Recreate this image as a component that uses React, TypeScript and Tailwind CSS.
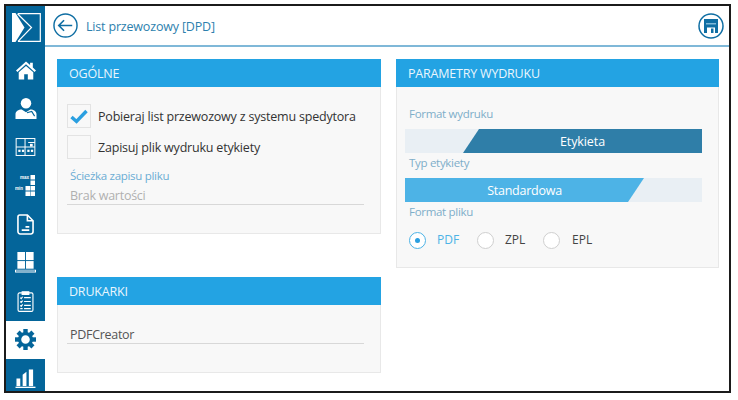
import React from "react";

const NavIcon = ({ children, active }: { children: React.ReactNode; active?: boolean }) => (
  <div className={active ? "h-[38.5px] shrink-0 flex items-center justify-center bg-white text-[#04659a]" : "h-[38.5px] shrink-0 flex items-center justify-center text-white"}>
    {children}
  </div>
);

const Logo = () => (
  <svg width="29" height="29" viewBox="0 0 29 29" fill="none">
    <path d="M0 0H3.5L12.5 14.5L3.5 29H0Z" fill="#fff" />
    <path d="M6 .7H28.3V28.3H6M5.5 .7L19.5 14.5L6 28.3" stroke="#fff" strokeWidth="1.2" />
  </svg>
);

const Home = () => (
  <svg width="20" height="19" viewBox="0 0 22 20" fill="currentColor">
    <path d="M11 0L15.5 4V1.5H18.5V6.7L22 10L20.4 11.6L11 3.2L1.6 11.6L0 10Z" />
    <path d="M11 5L19 12V20H13V14H9V20H3V12Z" />
  </svg>
);

const User = () => (
  <svg width="22" height="21" viewBox="0 0 22 22" fill="currentColor">
    <circle cx="11" cy="5.5" r="5.5" />
    <path d="M0 22V17C0 14 3 12 6.5 12L11 15L15.5 12C19 12 22 14 22 17V22H0Z" />
    <path d="M12 15.5L17 14L20 19" stroke="#04659a" strokeWidth="1.2" fill="none" />
  </svg>
);

const Grid = () => (
  <svg width="21" height="18" viewBox="0 0 22 20" fill="none" stroke="currentColor" strokeWidth="1.1">
    <rect x=".6" y=".6" width="20.8" height="18.8" />
    <path d="M.6 10H21.4M10.5.6V19.4M14 5H21.4" />
    <g fill="currentColor" stroke="none">
      <rect x="16" y="6.5" width="3" height="3" />
      <rect x="3" y="13" width="2.5" height="2.5" />
      <rect x="7" y="13" width="2.5" height="2.5" />
      <rect x="13" y="13" width="2.5" height="2.5" />
      <rect x="17" y="13" width="2.5" height="2.5" />
    </g>
  </svg>
);

const MaxMin = () => (
  <svg width="21" height="21" viewBox="0 0 21 21" fill="currentColor">
    <rect x="15.5" y="0" width="4.5" height="4.5" />
    <rect x="15.5" y="5.5" width="4.5" height="4.5" />
    <rect x="15.5" y="11" width="4.5" height="4.5" />
    <rect x="10.5" y="11" width="4.5" height="4.5" />
    <rect x="10.5" y="16.5" width="4.5" height="4.5" />
    <rect x="15.5" y="16.5" width="4.5" height="4.5" />
    <text x="5" y="4" fontSize="4.5" fontWeight="700" fontFamily="Liberation Sans, sans-serif">max</text>
    <text x="0" y="14.5" fontSize="4.5" fontWeight="700" fontFamily="Liberation Sans, sans-serif">min</text>
  </svg>
);

const Doc = () => (
  <svg width="17" height="21" viewBox="0 0 18 22" fill="none" stroke="currentColor" strokeWidth="1.7">
    <path d="M3 1H11L17 7V18.5C17 20 16 21 14.5 21H3.5C2 21 1 20 1 18.5V3C1 2 2 1 3 1Z" />
    <path d="M11 1V7H17M5 17H13M9 13.5H13" />
  </svg>
);

const Pallet = () => (
  <svg width="21" height="21" viewBox="0 0 22 22" fill="currentColor">
    <rect x="2.5" y="0" width="8" height="8.5" />
    <rect x="11.5" y="0" width="8" height="8.5" />
    <rect x="2.5" y="9.5" width="8" height="8" />
    <rect x="11.5" y="9.5" width="8" height="8" />
    <path fillRule="evenodd" d="M0 18.5H22V21.5H0ZM1 19.5V20.5H21V19.5Z" />
  </svg>
);

const Clipboard = () => (
  <svg width="17" height="21" viewBox="0 0 17 22" fill="none" stroke="currentColor" strokeWidth="1.2">
    <rect x=".7" y="2" width="15.6" height="19.4" rx="1.5" />
    <path d="M5 .8H12V3.5H5Z" fill="currentColor" />
    <path d="M3 7L4 8L5.5 6M3 11L4 12L5.5 10M3 15L4 16L5.5 14M3 18.5H5.5M7 7H14M7 11H14M7 15H14M7 18.5H14" strokeWidth="1.2" />
  </svg>
);

const Gear = () => (
  <svg width="21" height="21" viewBox="0 0 22 22">
    <circle cx="11" cy="11" r="6.2" fill="none" stroke="currentColor" strokeWidth="3.4" />
    {[0, 45, 90, 135, 180, 225, 270, 315].map((a) => (
      <rect key={a} x="8.7" y="0" width="4.6" height="4.5" fill="currentColor" transform={`rotate(${a} 11 11)`} />
    ))}
  </svg>
);

const Chart = () => (
  <svg width="21" height="19" viewBox="0 0 21 20" fill="currentColor">
    <rect x="1" y="10" width="4" height="8" />
    <path d="M7.5 6L11.5 3V18H7.5Z" />
    <rect x="14" y="0.5" width="4.5" height="17.5" />
    <rect x="0" y="18.6" width="21" height="1.4" />
  </svg>
);

const Card = ({ title, className, children }: { title: string; className: string; children: React.ReactNode }) => (
  <section className={`bg-[#f8f8f8] border border-[#e8e8e8] border-t-0 ${className}`}>
    <h2 className="h-[28px] -mx-px bg-[#23a3e3] text-[#eaf6fd] text-[12.5px] tracking-[-0.2px] font-normal leading-[29px] px-[12px]">{title}</h2>
    {children}
  </section>
);

const Check = ({ checked }: { checked?: boolean }) => (
  <span className="w-[24px] h-[24px] border border-[#e3e3e3] flex items-center justify-center shrink-0">
    {checked && (
      <svg width="18" height="15" viewBox="0 0 18 15" fill="none" stroke="#2a9fe0" strokeWidth="3.4">
        <path d="M1.5 8L6.5 12.5L16.5 2" />
      </svg>
    )}
  </span>
);

const Radio = ({ checked }: { checked?: boolean }) => (
  <span className={`w-[17px] h-[17px] rounded-full border flex items-center justify-center bg-white shrink-0 ${checked ? "border-[#4db3e6]" : "border-[#cfcfcf]"}`}>
    {checked && <span className="w-[5px] h-[5px] rounded-full bg-[#2a9fe0]" />}
  </span>
);

export default function App() {
  return (
    <div className="w-[738px] h-[400px] bg-white pt-[4px] pl-[4px]" style={{ fontFamily: '"Open Sans", sans-serif' }}>
      <div className="w-[727px] h-[389px] border-2 border-[#1b1b1b] flex overflow-hidden">
        <aside className="w-[39px] shrink-0 bg-[#04659a] flex flex-col overflow-hidden">
          <div className="h-[45px] shrink-0 flex justify-center pt-[7px] pl-[2px]"><Logo /></div>
          <NavIcon><Home /></NavIcon>
          <NavIcon><User /></NavIcon>
          <NavIcon><Grid /></NavIcon>
          <NavIcon><MaxMin /></NavIcon>
          <NavIcon><Doc /></NavIcon>
          <NavIcon><Pallet /></NavIcon>
          <NavIcon><Clipboard /></NavIcon>
          <NavIcon active><Gear /></NavIcon>
          <NavIcon><Chart /></NavIcon>
        </aside>
        <main className="flex-1 min-w-0 flex flex-col">
          <header className="h-[41px] shrink-0 border-b-2 border-[#7fb8d8] flex items-center justify-between pl-[8px] pr-[5px]">
            <div className="flex items-center gap-[8px]">
              <svg width="25" height="25" viewBox="0 0 26 26" fill="none" stroke="#0f6ea3" strokeWidth="1.5">
                <circle cx="13" cy="13" r="12" />
                <path d="M20 13H6.5M11.5 7.5L6 13L11.5 18.5" strokeWidth="1.7" />
              </svg>
              <span className="pt-[3px] text-[12.5px] tracking-[-0.18px] text-[#2d7fae]">List przewozowy [DPD]</span>
            </div>
            <svg width="26" height="26" viewBox="0 0 26 26" fill="none">
              <circle cx="13" cy="13" r="12" stroke="#0f6ea3" strokeWidth="1.5" />
              <path d="M6 6H20V20H6Z" fill="#0f6ea3" />
              <rect x="8" y="10" width="10" height="1.5" fill="#7fb8d8" />
              <rect x="9" y="14.5" width="8" height="5.5" fill="#fff" />
              <rect x="13" y="15.5" width="2.5" height="4.5" fill="#0f6ea3" />
            </svg>
          </header>
          <div className="flex-1 flex items-start pl-[12px] pt-[12px] gap-[15px]">
            <div className="w-[324px] flex flex-col gap-[43px]">
              <Card title="OGÓLNE" className="h-[175px]">
                <div className="pl-[9px] pr-[16px] pt-[17px]">
                  <div className="flex items-center gap-[7px] h-[24px] text-[12.5px] tracking-[-0.2px] text-[#333] whitespace-nowrap"><Check checked /><span className="pt-[2px]">Pobieraj list przewozowy z systemu spedytora</span></div>
                  <div className="flex items-center gap-[7px] h-[24px] mt-[7px] text-[12.5px] tracking-[-0.2px] text-[#333]"><Check /><span className="pt-[2px]">Zapisuj plik wydruku etykiety</span></div>
                  <div className="text-[11.5px] tracking-[-0.3px] text-[#6badd4] mt-[9px] pl-[3px] leading-[16px]">Ścieżka zapisu pliku</div>
                  <div className="text-[12.5px] tracking-[-0.25px] text-[#b0b0b0] mt-[4px] pl-[3px] leading-[16px] border-b border-[#d8d8d8]">Brak wartości</div>
                </div>
              </Card>
              <Card title="DRUKARKI" className="h-[96px]">
                <div className="pl-[9px] pr-[16px] pt-[22px]">
                  <div className="text-[12.5px] tracking-[-0.3px] text-[#555] pl-[3px] leading-[16px] border-b border-[#d8d8d8]">PDFCreator</div>
                </div>
              </Card>
            </div>
            <div className="w-[323px]">
              <Card title="PARAMETRY WYDRUKU" className="h-[209px]">
                <div className="pl-[8px] pr-[16px] pt-[19px]">
                  <div className="text-[11.5px] tracking-[-0.3px] text-[#7eaec9] pl-[4px] leading-[16px]">Format wydruku</div>
                  <div className="relative h-[24px] mt-[7px] bg-[#e9eff4]">
                    <div className="absolute inset-0 left-[58px] pt-[2px] bg-[#2f7ea8] text-white text-[12.5px] tracking-[-0.1px] flex items-center justify-center [clip-path:polygon(16px_0,100%_0,100%_100%,0_100%)]">Etykieta</div>
                  </div>
                  <div className="text-[11.5px] tracking-[-0.3px] text-[#7eaec9] pl-[4px] leading-[16px] mt-[2px]">Typ etykiety</div>
                  <div className="relative h-[24px] mt-[7px] bg-[#e9eff4]">
                    <div className="absolute inset-0 right-[58px] pt-[2px] bg-[#4db3e6] text-white text-[12.5px] tracking-[-0.25px] flex items-center justify-center [clip-path:polygon(0_0,100%_0,calc(100%-16px)_100%,0_100%)]">Standardowa</div>
                  </div>
                  <div className="text-[11.5px] tracking-[-0.3px] text-[#7eaec9] pl-[4px] leading-[16px] mt-[2px]">Format pliku</div>
                  <div className="flex items-center mt-[11px] pl-[4px] text-[12px]">
                    <Radio checked />
                    <span className="ml-[11px] w-[40px] text-[#4db3e6]">PDF</span>
                    <Radio />
                    <span className="ml-[11px] w-[38px] text-[#444]">ZPL</span>
                    <Radio />
                    <span className="ml-[12px] text-[#444]">EPL</span>
                  </div>
                </div>
              </Card>
            </div>
          </div>
        </main>
      </div>
    </div>
  );
}
